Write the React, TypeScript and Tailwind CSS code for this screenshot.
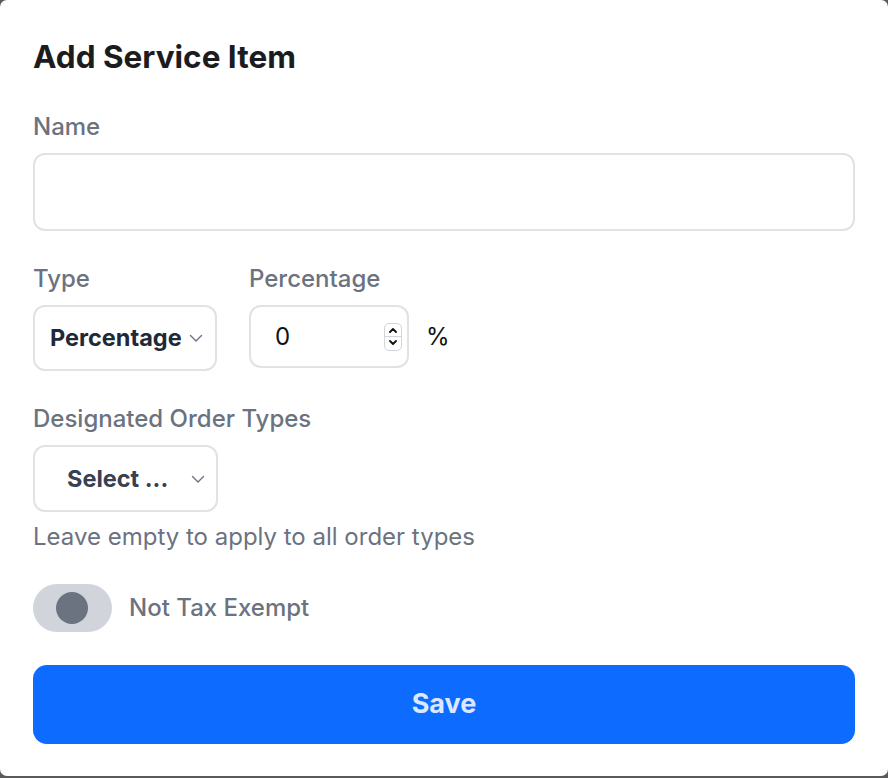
import React, { useState } from 'react';

const Chevron = ({ className }: { className?: string }) => (
  <svg viewBox="0 0 16 16" className={className} fill="none" stroke="currentColor" strokeWidth={1.4} strokeLinecap="round" strokeLinejoin="round">
    <path d="M2.5 5.5l5.5 5.5 5.5-5.5" />
  </svg>
);

const Spinner = () => (
  <div className="flex h-[28px] w-[18px] flex-col overflow-hidden rounded-[5px] border border-gray-300 bg-white">
    <div className="flex flex-1 items-center justify-center border-b border-gray-300">
      <svg viewBox="0 0 10 6" className="h-[6px] w-[10px]" fill="none" stroke="#111" strokeWidth={1.8} strokeLinecap="round" strokeLinejoin="round">
        <path d="M2 5l3-3 3 3" />
      </svg>
    </div>
    <div className="flex flex-1 items-center justify-center">
      <svg viewBox="0 0 10 6" className="h-[6px] w-[10px]" fill="none" stroke="#111" strokeWidth={1.8} strokeLinecap="round" strokeLinejoin="round">
        <path d="M2 1l3 3 3-3" />
      </svg>
    </div>
  </div>
);

export default function App() {
  const [name, setName] = useState('');
  const [taxExempt, setTaxExempt] = useState(false);

  return (
    <div className="h-[778px] w-[888px] bg-[#5a5a5a]" style={{ fontFamily: 'Inter, "Noto Sans", sans-serif' }}>
      <div className="flex h-[776px] w-[888px] flex-col rounded-[7px] bg-white px-[33px] pt-[38px]">
        <h2 className="text-[31.5px] font-bold leading-[38px] text-[#1c1c1e]">Add Service Item</h2>

        <label className="mt-[36px] text-[24px] font-medium leading-[30px] text-[#6b7280]">Name</label>
        <input
          value={name}
          onChange={e => setName(e.target.value)}
          className="mt-[11px] h-[78px] w-full rounded-[12px] border-2 border-[#e0e2e6] px-4 text-[24px] outline-none"
        />

        <div className="mt-[33px] flex gap-[32px]">
          <div className="flex flex-col">
            <span className="text-[24px] font-medium leading-[30px] text-[#6b7280]">Type</span>
            <div className="mt-[11px] flex h-[66px] w-[184px] items-center rounded-[12px] border-2 border-[#e0e2e6] pl-[15px]">
              <span className="text-[23.5px] font-bold text-[#1f2937]">Percentage</span>
              <Chevron className="ml-[6px] h-[16px] w-[16px] text-[#6b7280]" />
            </div>
          </div>
          <div className="flex flex-col">
            <span className="text-[24px] font-medium leading-[30px] text-[#6b7280]">Percentage</span>
            <div className="mt-[11px] flex items-center">
              <div className="flex h-[63px] w-[160px] items-center rounded-[12px] border-2 border-[#e0e2e6] pl-[24px] pr-[5px]">
                <span className="flex-1 text-[24px] text-[#111]">0</span>
                <Spinner />
              </div>
              <span className="ml-[17px] text-[24px] text-[#111]">%</span>
            </div>
          </div>
        </div>

        <span className="mt-[33px] text-[24px] font-medium leading-[30px] text-[#6b7280]">Designated Order Types</span>
        <div className="mt-[11px] flex h-[67px] w-[185px] items-center rounded-[12px] border-2 border-[#e0e2e6] pl-[32px]">
          <span className="text-[23.5px] font-bold text-[#374151]">Select ...</span>
          <Chevron className="ml-[22px] h-[16px] w-[16px] text-[#6b7280]" />
        </div>
        <span className="mt-[10px] text-[24px] leading-[30px] text-[#6b7280]">Leave empty to apply to all order types</span>

        <div className="mt-[32px] flex items-center">
          <button
            onClick={() => setTaxExempt(!taxExempt)}
            className="flex h-[48px] w-[79px] items-center rounded-full bg-[#d1d5db] pl-[23px]"
          >
            <span className="h-[32px] w-[32px] rounded-full bg-[#6b7280]" />
          </button>
          <span className="ml-[17px] text-[24px] font-medium text-[#6b7280]">
            {taxExempt ? 'Tax Exempt' : 'Not Tax Exempt'}
          </span>
        </div>

        <button className="mt-[33px] flex h-[79px] w-full items-center justify-center rounded-[14px] bg-[#0d6bff] text-[27px] font-bold text-[#dbe8ff]">
          Save
        </button>
      </div>
    </div>
  );
}
